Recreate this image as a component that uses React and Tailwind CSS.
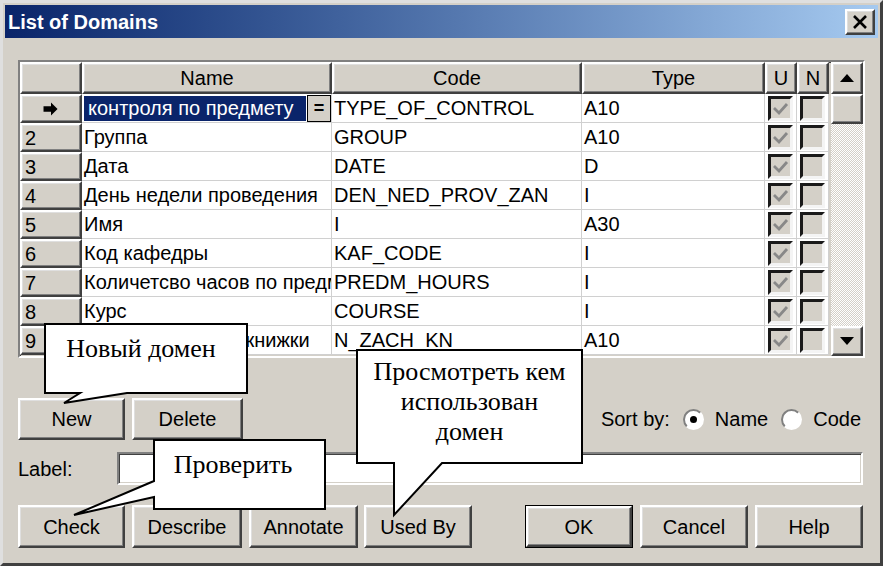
import React from 'react'

const raised =
  'bg-[#d4d0c8] border-2 border-t-white border-l-white border-r-[#404040] border-b-[#404040] shadow-[inset_-1px_-1px_#808080,inset_1px_1px_#dfdfdf]'
const sunken =
  'border-2 border-t-[#808080] border-l-[#808080] border-r-white border-b-white shadow-[inset_1px_1px_#404040,inset_-1px_-1px_#d4d0c8]'

const rows = [
  { n: '', name: 'контроля по предмету', code: 'TYPE_OF_CONTROL', type: 'A10' },
  { n: '2', name: 'Группа', code: 'GROUP', type: 'A10' },
  { n: '3', name: 'Дата', code: 'DATE', type: 'D' },
  { n: '4', name: 'День недели проведения', code: 'DEN_NED_PROV_ZAN', type: 'I' },
  { n: '5', name: 'Имя', code: 'I', type: 'A30' },
  { n: '6', name: 'Код кафедры', code: 'KAF_CODE', type: 'I' },
  { n: '7', name: 'Количетсво часов по предмету', code: 'PREDM_HOURS', type: 'I' },
  { n: '8', name: 'Курс', code: 'COURSE', type: 'I' },
  { n: '9', name: 'Номер зачетной  книжки', code: 'N_ZACH_KN', type: 'A10' },
]

function CheckBox({ checked }) {
  return (
    <div className="h-[25px] w-[25px] border-[3px] border-t-[#1a1a1a] border-l-[#1a1a1a] border-r-[#f4f4f4] border-b-[#f4f4f4] bg-[#d4d0c8]">
      {checked && (
        <svg width="19" height="19" viewBox="0 0 19 19">
          <path d="M3 9 L8 14 L16 5" fill="none" stroke="#888888" strokeWidth="2.8" />
        </svg>
      )}
    </div>
  )
}

function Radio({ on }) {
  return (
    <div className="flex h-[21px] w-[21px] items-center justify-center rounded-full border-2 border-t-[#808080] border-l-[#808080] border-r-white border-b-white bg-white">
      {on && <div className="h-[7px] w-[7px] rounded-full bg-black" />}
    </div>
  )
}

function Btn({ className, children }) {
  return (
    <div className={`${raised} flex items-center justify-center text-[20px] text-black ${className}`}>{children}</div>
  )
}

function GridRow({ r, first }) {
  return (
    <div className="flex h-[29px]">
      <div className={`${raised} flex h-[29px] w-[62px] items-center pl-[3px] text-[20px]`}>
        {first ? (
          <svg width="62" height="16" viewBox="0 0 62 16" className="-ml-[3px]">
            <path d="M23 5 H31 V1 L38 8 L31 15 V11 H23 Z" fill="#000" />
          </svg>
        ) : (
          r.n
        )}
      </div>
      <div className="flex h-[29px] w-[250px] items-center overflow-hidden whitespace-pre border-r border-b border-[#d0d0d0] bg-white">
        {first ? (
          <>
            <div className="ml-[2px] flex h-[25px] w-[222px] items-center overflow-hidden bg-[#0a246a] pl-[4px] text-white">
              {r.name}
            </div>
            <div className="ml-[1px] flex h-[27px] w-[24px] items-center justify-center border border-black bg-[#d4d0c8] text-[18px] font-bold leading-none">
              =
            </div>
          </>
        ) : (
          <span className="pl-[2px]">{r.name}</span>
        )}
      </div>
      <div className="flex h-[29px] w-[250px] items-center overflow-hidden whitespace-nowrap border-r border-b border-[#d0d0d0] bg-white pl-[2px]">
        {r.code}
      </div>
      <div className="flex h-[29px] w-[183px] items-center overflow-hidden whitespace-nowrap border-r border-b border-[#d0d0d0] bg-white pl-[2px]">
        {r.type}
      </div>
      <div className="flex h-[29px] w-[32px] items-center justify-center border-r border-b border-[#d0d0d0] bg-white">
        <CheckBox checked />
      </div>
      <div className="flex h-[29px] w-[32px] items-center justify-center border-r border-b border-[#d0d0d0] bg-white">
        <CheckBox />
      </div>
    </div>
  )
}

export default function App() {
  return (
    <div className="relative h-[566px] w-[883px] overflow-hidden font-['Liberation_Sans',Arial,sans-serif] text-[20px] text-black">
      <div className="flex h-full flex-col border-[3px] border-t-[#dfdfdf] border-l-[#dfdfdf] border-r-[#404040] border-b-[#404040] bg-[#d4d0c8] p-[2px]">
        {/* title bar */}
        <div className="flex h-[33px] items-center justify-between bg-linear-to-r from-[#0a246a] to-[#a6caf0] pl-[3px] pr-[3px]">
          <span className="text-[20px] font-bold text-white">List of Domains</span>
          <div className={`${raised} flex h-[26px] w-[30px] items-center justify-center`}>
            <svg width="16" height="14" viewBox="0 0 16 14">
              <path d="M2 1 L14 13 M14 1 L2 13" stroke="#000" strokeWidth="2.6" />
            </svg>
          </div>
        </div>

        <div className="flex flex-1 flex-col px-[13px]">
          {/* grid */}
          <div className={`${sunken} mt-[22px] flex h-[298px] w-[847px] gap-[2px] bg-[#d4d0c8]`}>
            <div className="flex w-[809px] flex-col">
              <div className="flex h-[32px]">
                <div className={`${raised} h-[32px] w-[62px]`} />
                <div className={`${raised} flex h-[32px] w-[250px] items-center justify-center`}>Name</div>
                <div className={`${raised} flex h-[32px] w-[250px] items-center justify-center`}>Code</div>
                <div className={`${raised} flex h-[32px] w-[183px] items-center justify-center`}>Type</div>
                <div className={`${raised} flex h-[32px] w-[32px] items-center justify-center`}>U</div>
                <div className={`${raised} flex h-[32px] w-[32px] items-center justify-center`}>N</div>
              </div>
              {rows.map((r, i) => (
                <GridRow key={i} r={r} first={i === 0} />
              ))}
            </div>
            <div className="flex w-[32px] flex-col">
              <div className={`${raised} flex h-[32px] items-center justify-center`}>
                <svg width="14" height="8" viewBox="0 0 14 8">
                  <path d="M0 8 L7 0 L14 8 Z" fill="#000" />
                </svg>
              </div>
              <div className={`${raised} h-[30px]`} />
              <div className="flex-1 bg-[repeating-conic-gradient(#ffffff_0%_25%,#d4d0c8_0%_50%)] bg-[length:2px_2px]" />
              <div className={`${raised} flex h-[30px] items-center justify-center`}>
                <svg width="14" height="8" viewBox="0 0 14 8">
                  <path d="M0 0 L7 8 L14 0 Z" fill="#000" />
                </svg>
              </div>
            </div>
          </div>

          {/* New / Delete / Sort by */}
          <div className="mt-[40px] flex h-[42px] items-center">
            <Btn className="h-[42px] w-[107px]">New</Btn>
            <Btn className="ml-[7px] h-[42px] w-[111px]">Delete</Btn>
            <div className="ml-auto mr-[4px] flex items-center">
              <span className="mr-[13px]">Sort by:</span>
              <Radio on />
              <span className="ml-[11px]">Name</span>
              <div className="ml-[13px]">
                <Radio />
              </div>
              <span className="ml-[11px]">Code</span>
            </div>
          </div>

          {/* Label */}
          <div className="mt-[12px] flex h-[33px] items-center">
            <span className="w-[99px]">Label:</span>
            <div className={`${sunken} mr-[2px] h-[33px] flex-1 bg-white`} />
          </div>

          {/* bottom buttons */}
          <div className="mt-[20px] flex h-[43px] items-center">
            <Btn className="h-[43px] w-[107px]">Check</Btn>
            <Btn className="ml-[7px] h-[43px] w-[110px]">Describe</Btn>
            <Btn className="ml-[7px] h-[43px] w-[109px]">Annotate</Btn>
            <Btn className="ml-[6px] h-[43px] w-[108px]">Used By</Btn>
            <div className="ml-[53px] h-[43px] w-[108px] border border-black">
              <Btn className="h-full w-full">OK</Btn>
            </div>
            <Btn className="ml-[7px] h-[43px] w-[108px]">Cancel</Btn>
            <Btn className="ml-[7px] h-[43px] w-[108px]">Help</Btn>
          </div>
        </div>
      </div>

      {/* callouts */}
      <svg className="pointer-events-none absolute left-0 top-0" width="883" height="566" viewBox="0 0 883 566">
        <path d="M45 324 H247 V393 H127 L64 403 L80 393 H45 Z" fill="#fff" stroke="#000" strokeWidth="2" />
        <path d="M154 440 H325 V509 H154 V497 L74 515 L154 481 Z" fill="#fff" stroke="#000" strokeWidth="2" />
        <path d="M357 350 H582 V463 H442 L394 515 V463 H357 Z" fill="#fff" stroke="#000" strokeWidth="2" />
      </svg>
      <div className="pointer-events-none absolute left-[45px] top-[334px] w-[192px] text-center font-['Liberation_Serif','Times_New_Roman',serif] text-[26px] leading-[30px]">
        Новый домен
      </div>
      <div className="pointer-events-none absolute left-[154px] top-[450px] w-[158px] text-center font-['Liberation_Serif','Times_New_Roman',serif] text-[26px] leading-[30px]">
        Проверить
      </div>
      <div className="pointer-events-none absolute left-[357px] top-[357px] w-[225px] text-center font-['Liberation_Serif','Times_New_Roman',serif] text-[26px] leading-[30px]">
        Просмотреть кем
        <br />
        использован
        <br />
        домен
      </div>
    </div>
  )
}
